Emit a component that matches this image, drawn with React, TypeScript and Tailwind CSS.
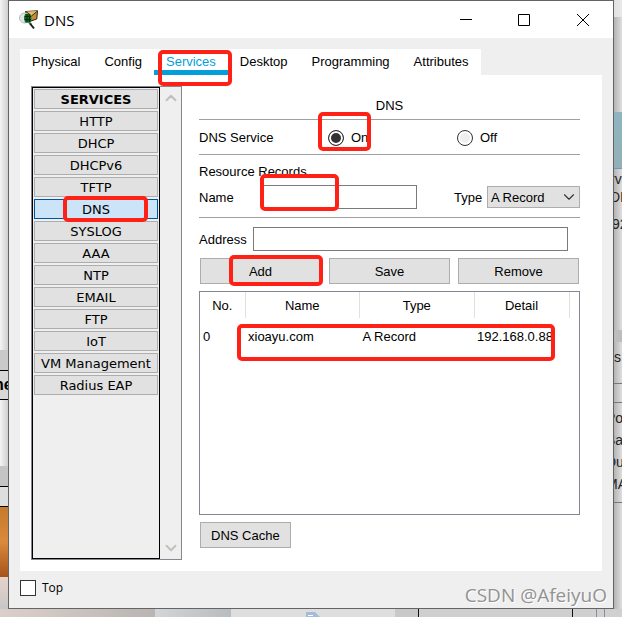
import React from 'react';
import { ChevronDown, ChevronUp } from 'lucide-react';

const TABS = ['Physical', 'Config', 'Services', 'Desktop', 'Programming', 'Attributes'];

const SERVICES = [
  'HTTP',
  'DHCP',
  'DHCPv6',
  'TFTP',
  'DNS',
  'SYSLOG',
  'AAA',
  'NTP',
  'EMAIL',
  'FTP',
  'IoT',
  'VM Management',
  'Radius EAP',
];

const RECORDS = [{ no: 0, name: 'xioayu.com', type: 'A Record', detail: '192.168.0.88' }];

// Hand-drawn red marker frame, always laid over the thing it points at
const Marker: React.FC<{ className: string }> = ({ className }) => (
  <span
    aria-hidden
    className={`pointer-events-none absolute z-10 rounded-[5px] border-4 border-[#ff2115] ${className}`}
  />
);

const AppIcon = () => (
  <svg width="20" height="20" viewBox="0 0 20 20" aria-hidden>
    <path d="M6.5 1.5 18.5.8 17.8 9 9 12z" fill="#c08f34" stroke="#2e2412" strokeWidth="1" />
    <path d="M7 1.5 12.5 6 18.5 1" fill="#e3bd66" stroke="#3a2c12" strokeWidth="1" />
    <circle cx="5.5" cy="8" r="5" fill="#dfe4e4" stroke="#b4baba" />
    <path d="M6 4h4.5L12.5 8l-.5 4.5H6L5 8z" fill="#0d6a22" />
    <path d="M5.5 6.5h6.500M5.500 9.500H12M8 4v8.500M10.500 4v8.500" stroke="#052a0e" />
    <path d="m9.500 13 1.500 1h2" fill="none" stroke="#555" />
    <path d="m11 13.500 4 5" stroke="#1c1c1c" strokeWidth="2" />
  </svg>
);

const TitleBar = () => (
  <header className="flex h-[37px] items-center bg-white pl-[10px]">
    <AppIcon />
    <h1 className="ml-[5px] flex-1 font-['Open_Sans',sans-serif] text-[15px] leading-5">DNS</h1>
    <button type="button" aria-label="Minimize" className="flex w-[58px] justify-center">
      <svg width="12" height="12" fill="none" stroke="#000">
        <path d="M0 5.5h12" />
      </svg>
    </button>
    <button type="button" aria-label="Maximize" className="flex w-[58px] justify-center">
      <svg width="12" height="12" fill="none" stroke="#000">
        <path d="M.5.5h11v11H.5z" />
      </svg>
    </button>
    <button type="button" aria-label="Close" className="flex w-[60px] justify-center">
      <svg width="12" height="12" fill="none" stroke="#000">
        <path d="m0 0 12 12M12 0 0 12" />
      </svg>
    </button>
  </header>
);

const Tabs = () => (
  <nav className="flex">
    <div className="flex bg-white">
      {TABS.map((tab) => (
        <button
          key={tab}
          type="button"
          className={`relative h-[26px] border-b-[5px] px-3 pt-[5px] leading-4 ${
            tab === 'Services' ? 'border-[#049fd9] text-[#049fd9]' : 'border-transparent'
          }`}
        >
          {tab}
          {tab === 'Services' && <Marker className="-right-1 -bottom-4 left-1 h-9" />}
        </button>
      ))}
    </div>
  </nav>
);

const Sidebar = () => (
  <aside className="flex border border-[#828790] bg-[#efefef]">
    <div className="flex w-32 flex-col gap-0.5 border border-black p-px font-['DejaVu_Sans',sans-serif]">
      <h2 className="h-5 border border-[#adadad] bg-[#e1e1e1] text-center leading-5 font-bold">
        SERVICES
      </h2>
      {SERVICES.map((service) => (
        <button
          key={service}
          type="button"
          className={`relative h-5 border pt-0.5 leading-4 ${
            service === 'DNS' ? 'border-[#005499] bg-[#cce4f7]' : 'border-[#adadad] bg-[#e1e1e1]'
          }`}
        >
          {service}
          {service === 'DNS' && <Marker className="-inset-y-1 right-[9px] left-7" />}
        </button>
      ))}
    </div>
    <div className="flex w-[21px] flex-col items-center justify-between py-0.5 text-[#bfbfbf]">
      <ChevronUp size={18} strokeWidth={2.5} />
      <ChevronDown size={18} strokeWidth={2.5} />
    </div>
  </aside>
);

const Radio: React.FC<{ label: string; checked?: boolean }> = ({ label, checked }) => (
  <label className="relative flex items-center gap-[7px]">
    <input
      type="radio"
      name="service"
      defaultChecked={checked}
      className="size-4 appearance-none rounded-full border border-[#333] bg-[#efefef] shadow-[inset_0_0_0_2px_#fff] checked:bg-[#333]"
    />
    {label}
    {checked && <Marker className="-top-[18px] -left-[10px] h-[39px] w-[53px]" />}
  </label>
);

const Button: React.FC<{ className?: string; children: React.ReactNode }> = ({
  className = '',
  children,
}) => (
  <button
    type="button"
    className={`relative h-[26px] border border-[#adadad] bg-[#e1e1e1] px-[10px] pt-0.5 leading-4 ${className}`}
  >
    {children}
  </button>
);

const RecordsTable = () => (
  <div className="min-h-[224px] flex-1 border border-[#828790]">
    <table className="w-full table-fixed">
      <colgroup>
        <col className="w-[45px]" />
        <col />
        <col />
        <col className="w-[95px]" />
        <col className="w-[10px]" />
      </colgroup>
      <thead>
        <tr className="h-[26px]">
          {['No.', 'Name', 'Type', 'Detail'].map((head) => (
            <th
              key={head}
              scope="col"
              className="border-r border-[#e0e0e0] p-0 pt-0.5 font-normal"
            >
              {head}
            </th>
          ))}
          <td />
        </tr>
      </thead>
      <tbody>
        {RECORDS.map((record) => (
          <tr key={record.no} className="h-[38px]">
            <td className="pl-[3px]">{record.no}</td>
            <td className="relative pl-[3px]">
              {record.name}
              <Marker className="top-[6px] -left-2 h-[37px] w-[318px]" />
            </td>
            <td className="pl-[3px]">{record.type}</td>
            <td className="pl-[3px] whitespace-nowrap">{record.detail}</td>
            <td />
          </tr>
        ))}
      </tbody>
    </table>
  </div>
);

const DnsPanel = () => (
  <section className="mr-[11px] flex flex-1 flex-col pb-3">
    <h2 className="border-b border-[#a0a0a0] pt-3 pb-[5px] text-center leading-4">DNS</h2>
    <div className="grid h-[35px] grid-cols-[129px_129px_1fr] items-center border-b border-[#a0a0a0] pt-0.5">
      <span>DNS Service</span>
      <Radio label="On" checked />
      <Radio label="Off" />
    </div>
    <div className="border-b border-[#a0a0a0] pt-[9px] pb-2">
      <p className="mb-[5px] leading-4">Resource Records</p>
      <div className="flex items-center">
        <label htmlFor="name" className="w-16 pt-0.5">
          Name
        </label>
        <div className="relative mr-[37px] flex min-w-0 flex-1">
          <input id="name" className="h-6 w-full border border-[#7a7a7a] bg-white px-1" />
          <Marker className="-top-[11px] -left-[3px] h-[37px] w-[79px]" />
        </div>
        <label htmlFor="type" className="w-[33px] pt-0.5">
          Type
        </label>
        <div className="grid w-[93px] items-center">
          <select
            id="type"
            className="col-start-1 row-start-1 h-[22px] appearance-none border border-[#adadad] bg-[#e1e1e1] pt-0.5 pl-[3px] leading-4"
          >
            <option>A Record</option>
          </select>
          <ChevronDown
            size={18}
            strokeWidth={1.5}
            className="pointer-events-none col-start-1 row-start-1 mr-[2px] justify-self-end text-[#333]"
          />
        </div>
      </div>
    </div>
    <div className="mt-[9px] mr-3 flex items-center">
      <label htmlFor="address" className="w-[54px] pt-0.5">
        Address
      </label>
      <input
        id="address"
        className="h-6 min-w-0 flex-1 border border-[#7a7a7a] bg-white px-1"
      />
    </div>
    <div className="my-[7px] grid grid-cols-3 gap-2 px-px">
      <Button>
        Add
        <Marker className="-top-1 -right-[3px] -bottom-[3px] left-7" />
      </Button>
      <Button>Save</Button>
      <Button>Remove</Button>
    </div>
    <RecordsTable />
    <Button className="mt-[7px] ml-px self-start">DNS Cache</Button>
  </section>
);

// Slivers of the windows lying behind the dialog
const LeftEdge = () => (
  <div className="flex w-2 flex-col overflow-hidden bg-[#dcdcdc] text-base font-bold">
    <div className="h-[350px] bg-linear-to-r from-[#f4f4f4] to-[#cfcfcf]" />
    <div className="h-5 bg-[#c9c9c9]" />
    <div className="flex h-[30px] items-center border-y border-black bg-[#d8d8d8]">
      <span className="-ml-[6px]">ne</span>
    </div>
    <div className="h-[66px] bg-linear-to-r from-[#f4f4f4] to-[#cfcfcf]" />
    <div className="h-5 bg-[#c4c4c4]" />
    <div className="h-[21px] border-y border-black bg-[#dedede]" />
    <div className="h-[70px] bg-linear-to-b from-[#c77a2c] via-[#d98a3a] to-[#a8521a]" />
    <div className="flex-1 bg-linear-to-b from-[#e4d3cb] to-[#c9c6c6]" />
  </div>
);

const RightEdge = () => (
  <div className="flex w-2 flex-col overflow-hidden bg-linear-to-r from-[#b4b4b4] to-[#dedede] text-sm leading-[22px] text-[#222]">
    <div className="h-[17px] bg-[#ececec]/80" />
    <div className="h-[95px]" />
    <div className="h-[57px] border-b border-[#6c9fb0] bg-linear-to-b from-[#8fb5c0] to-[#93b0b7]" />
    <div className="h-[161px]">
      <p className="-ml-1 leading-5">rv</p>
      <p className="-ml-1 leading-4">DI</p>
      <p className="-ml-[2px] pt-2">92</p>
    </div>
    <div className="h-3 bg-[#bdbdbd]" />
    <div className="h-[41px] pt-1">s</div>
    <div className="h-5 border-y border-[#777]" />
    <div className="h-[100px] border-b border-[#777] pt-1">
      <p className="-ml-2">Po</p>
      <p className="-ml-2">Ba</p>
      <p className="-ml-2">Du</p>
      <p className="-ml-2">MA</p>
    </div>
  </div>
);

const BottomEdge = () => (
  <div className="flex h-2 overflow-hidden bg-[#d0d0d0]">
    <div className="w-[155px] bg-linear-to-r from-[#dccfcb] to-[#b9b5b2]" />
    <div className="w-[76px] bg-linear-to-r from-[#d3d5d7] to-[#b9bcbe]" />
    <div className="flex w-[164px] justify-center bg-[#dedede]">
      <svg width="16" height="12" aria-hidden>
        <path d="M1 3h9l5 5v4H1z" fill="#a6bbda" />
        <path d="M3 6.5h5" stroke="#fff" />
      </svg>
    </div>
    <div className="w-6 border-r border-[#111] bg-[#c8c8c8]" />
    <div className="w-[154px] border-r border-[#111] bg-[#cfcfcf]" />
    <div className="w-6 border-r border-[#8c8c9c]" />
    <div className="w-2 border-r border-[#8c8c9c]" />
  </div>
);

export default function App() {
  return (
    <div className="flex min-h-screen flex-col overflow-hidden font-['Liberation_Sans',Arial,sans-serif] text-[13px] leading-4 text-black">
      <div className="flex flex-1">
        <LeftEdge />
        <main className="flex min-w-0 flex-1 flex-col border border-[#646464] bg-[#efefef]">
          <TitleBar />
          <div className="flex flex-1 flex-col px-[11px] pt-[11px]">
            <Tabs />
            <div className="flex flex-1 gap-[17px] bg-white p-[11px]">
              <Sidebar />
              <DnsPanel />
            </div>
          </div>
          <footer className="relative flex h-[37px] items-center pb-1 pl-[11px]">
            <label className="flex items-center gap-[6px] font-['Open_Sans',sans-serif] text-[12px]">
              <input
                type="checkbox"
                className="size-4 appearance-none border border-[#333] bg-white checked:bg-[#333]"
              />
              Top
            </label>
            <span className="absolute right-[6px] bottom-px font-['Open_Sans',sans-serif] text-[19px] leading-6 text-[#929292] [text-shadow:1px_1px_0_#fff]">
              CSDN @AfeiyuO
            </span>
          </footer>
        </main>
        <RightEdge />
      </div>
      <BottomEdge />
    </div>
  );
}
